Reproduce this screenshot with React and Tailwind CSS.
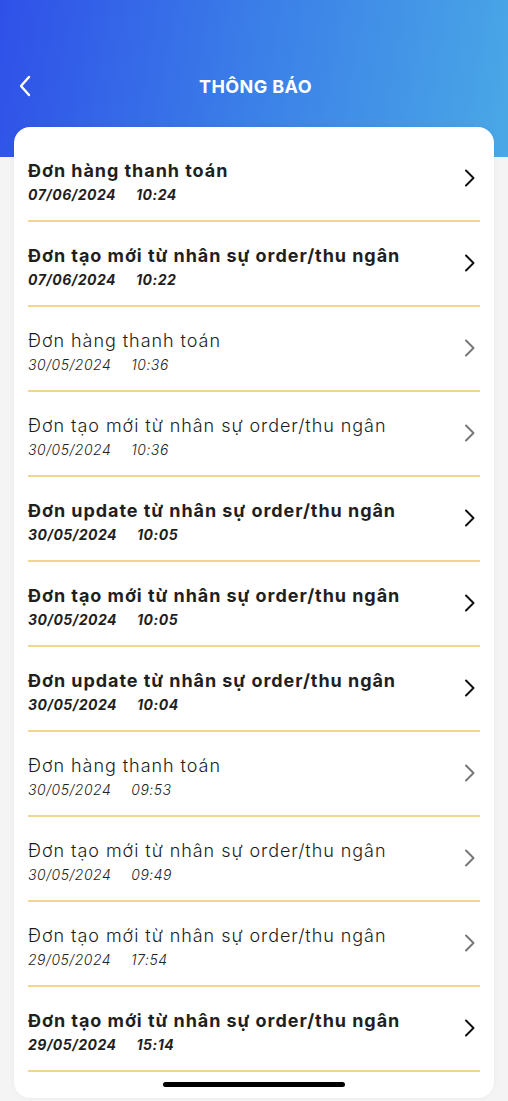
import React from "react";

const items = [
  { title: "Đơn hàng thanh toán", date: "07/06/2024", time: "10:24", unread: true },
  { title: "Đơn tạo mới từ nhân sự order/thu ngân", date: "07/06/2024", time: "10:22", unread: true },
  { title: "Đơn hàng thanh toán", date: "30/05/2024", time: "10:36", unread: false },
  { title: "Đơn tạo mới từ nhân sự order/thu ngân", date: "30/05/2024", time: "10:36", unread: false },
  { title: "Đơn update từ nhân sự order/thu ngân", date: "30/05/2024", time: "10:05", unread: true },
  { title: "Đơn tạo mới từ nhân sự order/thu ngân", date: "30/05/2024", time: "10:05", unread: true },
  { title: "Đơn update từ nhân sự order/thu ngân", date: "30/05/2024", time: "10:04", unread: true },
  { title: "Đơn hàng thanh toán", date: "30/05/2024", time: "09:53", unread: false },
  { title: "Đơn tạo mới từ nhân sự order/thu ngân", date: "30/05/2024", time: "09:49", unread: false },
  { title: "Đơn tạo mới từ nhân sự order/thu ngân", date: "29/05/2024", time: "17:54", unread: false },
  { title: "Đơn tạo mới từ nhân sự order/thu ngân", date: "29/05/2024", time: "15:14", unread: true },
];

const Chevron = ({ className }) => (
  <svg width="12" height="18" viewBox="0 0 12 18" fill="none" className={className}>
    <path d="M2 1.5L9.5 9L2 16.5" stroke="currentColor" strokeWidth="2" strokeLinecap="round" strokeLinejoin="round" />
  </svg>
);

const Row = ({ item }) => (
  <div className="flex items-center justify-between h-[85px] pt-[6px] border-b-2 border-[#f2d58f]">
    <div className="flex flex-col">
      <div
        className={`text-[18px] leading-[22px] tracking-[0.95px] ${item.unread ? "font-bold text-[#1f1f1f]" : "font-light text-[#1c1c1c]"}`}
      >
        {item.title}
      </div>
      <div
        className={`mt-[4px] flex gap-[20px] text-[14px] leading-[18px] italic tracking-[0.5px] ${item.unread ? "font-bold text-[#1f1f1f]" : "font-light text-[#222]"}`}
      >
        <span>{item.date}</span>
        <span>{item.time}</span>
      </div>
    </div>
    <Chevron className={`mr-[4px] mb-[8px] ${item.unread ? "text-[#111]" : "text-[#777]"}`} />
  </div>
);

export default function App() {
  return (
    <div className="min-h-[1101px] bg-[#f4f4f4] font-['Inter',sans-serif]">
      <header className="h-[157px] bg-[linear-gradient(100deg,#2f50e8_0%,#3b7fe8_50%,#4aa8e6_100%)] flex items-start pt-[71px] px-[18px] relative">
        <svg width="14" height="22" viewBox="0 0 14 22" fill="none" className="mt-[4px]">
          <path d="M11 2L3 11L11 20" stroke="white" strokeWidth="2.4" strokeLinecap="round" strokeLinejoin="round" />
        </svg>
        <h1 className="absolute left-0 right-0 top-[73px] text-center text-white font-bold text-[18px] tracking-[0.4px] pl-[3px]">
          THÔNG BÁO
        </h1>
      </header>
      <div className="-mt-[30px] mx-[14px] bg-white rounded-[16px] pt-[10px] px-[14px] pb-[26px] relative shadow-[0_0_6px_rgba(0,0,0,0.04)]">
        {items.map((item, i) => (
          <Row key={i} item={item} />
        ))}
        <div className="absolute bottom-[11px] left-0 right-0 flex justify-center">
          <div className="w-[182px] h-[5px] rounded-full bg-black" />
        </div>
      </div>
    </div>
  );
}
